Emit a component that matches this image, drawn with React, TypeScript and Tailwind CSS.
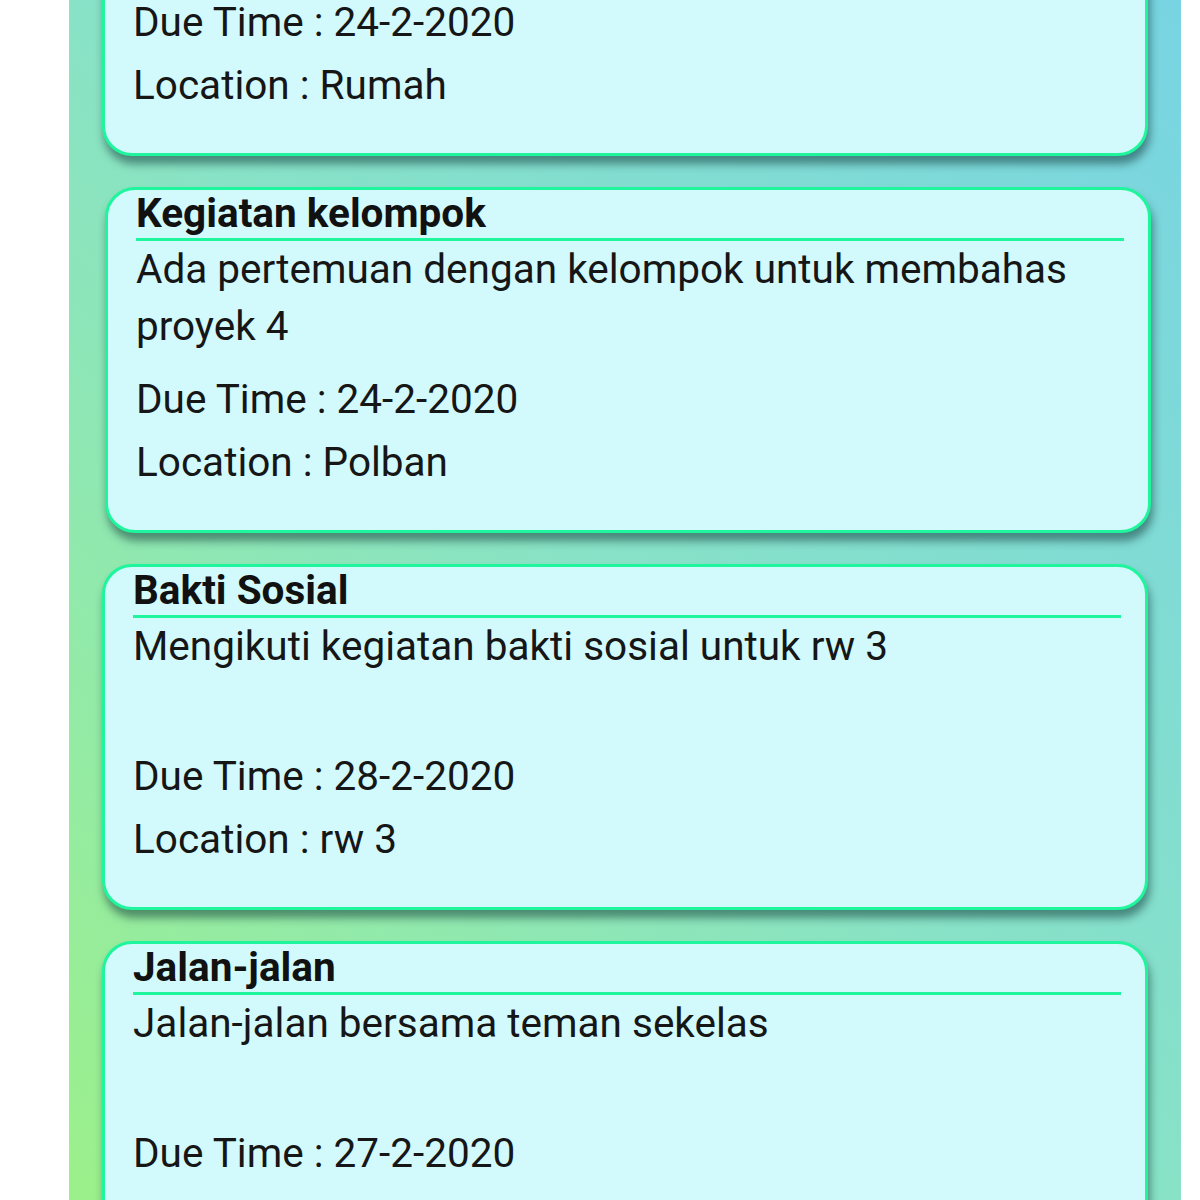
import React from "react";

type Item = { title: string; desc: string[]; due: string; loc: string; shift?: boolean };

const items: Item[] = [
  { title: "Tugas", desc: ["", ""], due: "24-2-2020", loc: "Rumah" },
  {
    title: "Kegiatan kelompok",
    desc: ["Ada pertemuan dengan kelompok untuk membahas", "proyek 4"],
    due: "24-2-2020",
    loc: "Polban",
    shift: true,
  },
  { title: "Bakti Sosial", desc: ["Mengikuti kegiatan bakti sosial untuk rw 3"], due: "28-2-2020", loc: "rw 3" },
  { title: "Jalan-jalan", desc: ["Jalan-jalan bersama teman sekelas"], due: "27-2-2020", loc: "Kampus" },
];

function Card({ item }: { item: Item }) {
  return (
    <div
      className={
        "h-[346px] shrink-0 rounded-[30px] border-[3px] border-[#1ef59c] bg-[#d2fafc] pl-[28px] pr-[24px] shadow-[2px_8px_8px_rgba(10,50,50,0.5)] " +
        (item.shift ? "ml-[36px] mr-[30px]" : "ml-[33px] mr-[33px]")
      }
    >
      <div className="h-[48px] whitespace-nowrap text-[40.5px] font-bold leading-[46px] text-[#111]">{item.title}</div>
      <div className="h-[3px] bg-[#1ef59c]" />
      <div className="h-[114px] text-[40.5px] leading-[57px] text-[#161616]">
        {item.desc.map((d, i) => (
          <div key={i} className="h-[57px] whitespace-nowrap">
            {d}
          </div>
        ))}
      </div>
      <div className="mt-[13px] whitespace-nowrap text-[40.5px] leading-[63px] text-[#161616]">Due Time : {item.due}</div>
      <div className="whitespace-nowrap text-[40.5px] leading-[63px] text-[#161616]">Location : {item.loc}</div>
    </div>
  );
}

export default function App() {
  return (
    <div className="flex h-[1200px] w-[1200px] overflow-hidden bg-white" style={{ fontFamily: "Roboto, 'Liberation Sans', sans-serif" }}>
      <div className="w-[69px] shrink-0 bg-white" />
      <div className="h-[1200px] w-[1112px] shrink-0 overflow-hidden bg-linear-to-tr from-[#9cf08a] via-[#88e2c6] to-[#78d4e2]">
        <div className="mt-[-190px] flex flex-col gap-[31px]">
          {items.map((it, i) => (
            <Card key={i} item={it} />
          ))}
        </div>
      </div>
      <div className="flex-1 bg-white" />
    </div>
  );
}
